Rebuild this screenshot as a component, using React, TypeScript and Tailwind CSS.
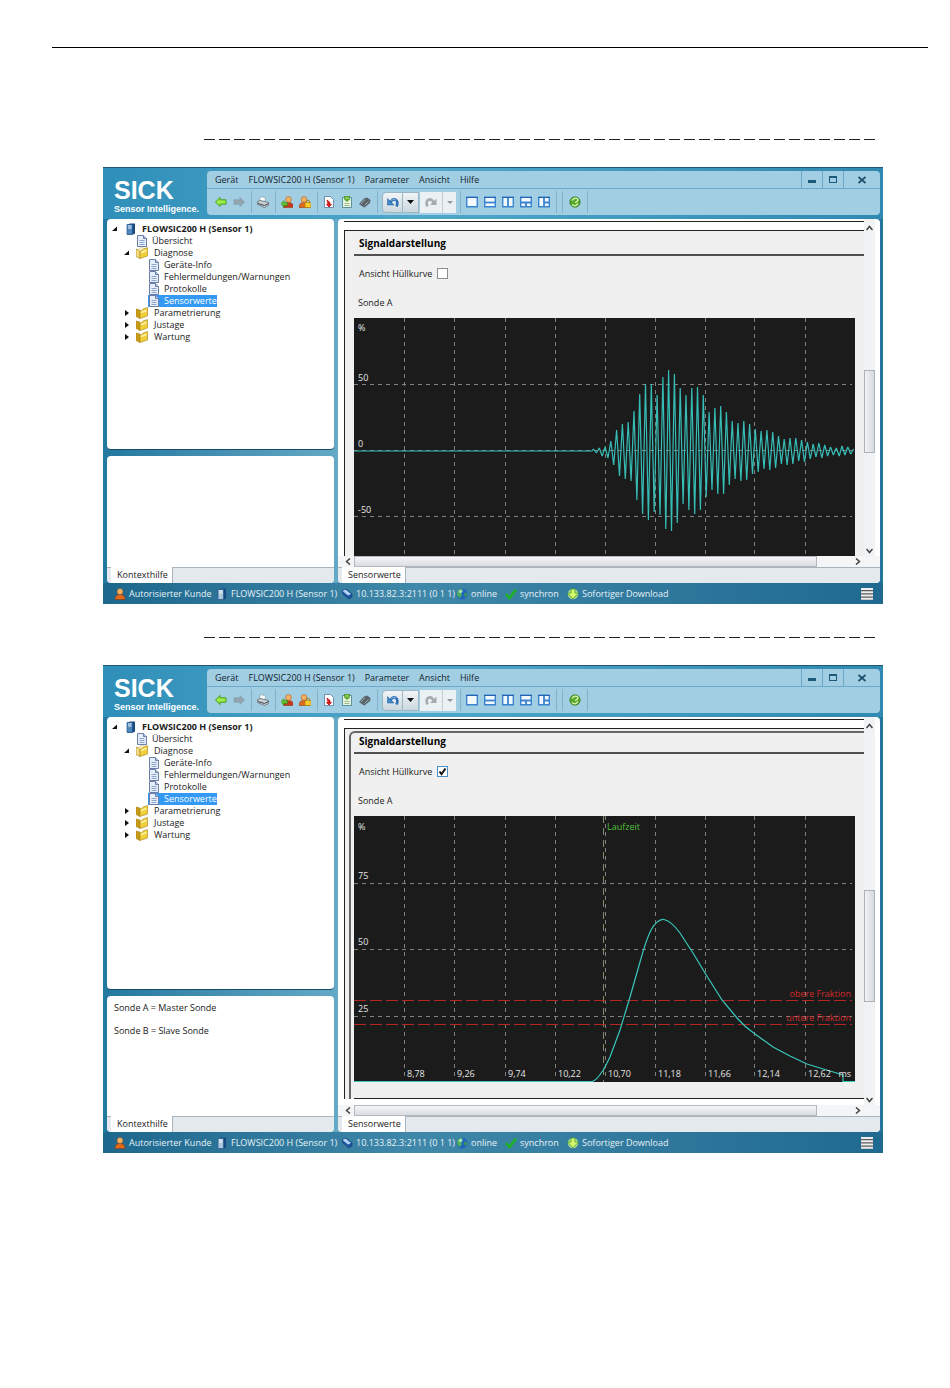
import { useState, type ReactNode } from "react";
import { clsx } from "clsx";

const MENU = ["Gerät", "FLOWSIC200 H (Sensor 1)", "Parameter", "Ansicht", "Hilfe"];

const GRID_X = [50, 100, 151, 201, 251, 301, 351, 400, 451];
const TIMES = ["8,78", "9,26", "9,74", "10,22", "10,70", "11,18", "11,66", "12,14", "12,62"];

// Burst amplitudes in chart pixels, one entry per oscillation.
const PEAKS = [
  2, 3, 4, 10, 21, 27, 29, 40, 57, 67, 67, 56, 74, 81, 77, 63, 56, 63, 64, 56, 39, 43, 45, 39, 30, 28, 30, 27,
  22, 20, 21, 19, 15, 12, 13, 13, 11, 9, 7, 8, 6, 4, 3, 5, 4, 2,
];
const TROUGHS = [
  2, 5, 7, 14, 25, 28, 30, 49, 63, 69, 61, 64, 78, 80, 72, 53, 59, 63, 59, 46, 39, 43, 43, 34, 28, 30, 29, 23,
  21, 18, 19, 17, 13, 14, 13, 10, 11, 8, 6, 7, 5, 4, 5, 4, 3, 1,
];

function burstPath(): string {
  const parts = ["M0 133H238"];
  PEAKS.forEach((peak, i) => {
    const x = 239.5 + i * 5.78;
    parts.push(`L${x.toFixed(1)} ${133 - peak}`);
    if (x + 2.9 < 501) parts.push(`L${(x + 2.9).toFixed(1)} ${133 + TROUGHS[i]}`);
  });
  return parts.join("");
}

function Icon({ children, size = 12 }: { children: ReactNode; size?: number }) {
  return (
    <svg width={size} height={size} viewBox="0 0 12 12" className="shrink-0" aria-hidden="true">
      {children}
    </svg>
  );
}

function PageIcon() {
  return (
    <Icon>
      <path d="M1.500.5h6l3 3v8h-9z" fill="#e6eefa" stroke="#6a7fa8" />
      <path d="M7.500.5v3h3" fill="#b7c8e4" stroke="#6a7fa8" />
      <path d="M3.500 5.500h5M3.500 7.500h5M3.500 9.500h5" stroke="#8fa5cc" />
    </Icon>
  );
}

function FolderIcon({ open }: { open?: boolean }) {
  return (
    <Icon>
      <path d="M0 2l4 1V11.500L0 9.500z" fill={open ? "#f3dc83" : "#c99c14"} stroke="#a8831c" strokeWidth=".6" />
      <path d="M4 4l2-.5L7 2l4.500-1.500V9L4 11.500z" fill="#f0cf3a" stroke="#a8831c" strokeWidth=".6" />
      <path d="M5 5.500l5.500-2" stroke="#fdf2a8" strokeWidth="1.500" />
      {open && <path d="M1.500 3l4-2.500 3 1-4.500 2.500z" fill="#fff6cf" stroke="#c9a63c" strokeWidth=".5" />}
    </Icon>
  );
}

function DeviceIcon({ light }: { light?: boolean }) {
  return (
    <Icon>
      <path d="M3 1.500L5 .5h5v10l-2 1H3z" fill="#174a80" />
      <path d="M2 1.500h5.500v10H2z" fill={light ? "#a9c6da" : "#4f87bd"} stroke="#24568b" strokeWidth=".7" />
      <path d="M3 3h3.500M3 5h3.500" stroke="#f2f8fc" />
    </Icon>
  );
}

function Twisty({ open }: { open?: boolean }) {
  return (
    <svg width="6" height="6" viewBox="0 0 6 6" aria-hidden="true">
      <path d={open ? "M5 .5V5H0z" : "M1 0l4 3-4 3z"} fill="#111" />
    </svg>
  );
}

const ARROW = "M.5 6L5 1.500v2.300h6v4.400H5v2.300z";

function PersonIcon({ color = "#e06a1c" }: { color?: string }) {
  return (
    <>
      <path d="M1 11.500c0-3.500 2-5 5-5s5 1.500 5 5z" fill={color} stroke="#8d2e08" strokeWidth=".5" />
      <circle cx="6" cy="3.500" r="2.900" fill="#f4b264" stroke="#a04a12" strokeWidth=".5" />
    </>
  );
}

const TOOLS: { label: string; icon: ReactNode; sep?: boolean }[] = [
  { label: "Zurück", icon: <path d={ARROW} fill="#9bea45" stroke="#3fa01c" strokeWidth="1" /> },
  {
    label: "Vor",
    icon: <path d={ARROW} transform="matrix(-1 0 0 1 12 0)" fill="#93a5ae" stroke="#7d98a4" strokeWidth=".6" />,
    sep: true,
  },
  {
    label: "Drucken",
    icon: (
      <>
        <path d="M2.500 5l1-4.500 5 1.500-.5 3.500z" fill="#fff" stroke="#8a979f" strokeWidth=".6" />
        <path d="M.5 5.500l3-1 8 2v3l-4 2-7-3z" fill="#c6ccd0" stroke="#5c666e" strokeWidth=".7" />
        <path d="M1 7.500l6.500 2 4-2" fill="none" stroke="#3f474d" />
      </>
    ),
    sep: true,
  },
  {
    label: "Anmelden",
    icon: (
      <>
        <g transform="translate(1.500 0)"><PersonIcon color="#c8381c" /></g>
        <path d="M0 7.500l3-3v2h3.500v3H3v2z" fill="#5fc02c" stroke="#2c7a14" strokeWidth=".5" />
      </>
    ),
  },
  {
    label: "Benutzer sperren",
    icon: (
      <>
        <g transform="translate(-1 0)"><PersonIcon /></g>
        <path d="M6 6.500h6v5H6z" fill="#f6cb2d" stroke="#a47708" strokeWidth=".6" />
        <path d="M7.500 6V5q1.500-2 3 0v1" fill="none" stroke="#a47708" />
      </>
    ),
    sep: true,
  },
  {
    label: "PDF",
    icon: (
      <>
        <path d="M1.500.5h6l3 3v8h-9z" fill="#fff" stroke="#55779c" strokeWidth=".8" />
        <path d="M4 4l3 2.500v2h1.500L6 11 3.500 8.500H5z" fill="#d8201c" stroke="#c01414" strokeWidth=".8" />
      </>
    ),
  },
  {
    label: "Bericht",
    icon: (
      <>
        <path d="M1.500 1.500h9v10h-9z" fill="#e9f4dc" stroke="#3f7c8c" strokeWidth=".8" />
        <path d="M3.500 0h5v3.500L6 5.500l-2.500-2z" fill="#62b32c" stroke="#2f7718" strokeWidth=".5" />
        <path d="M5 1v2M7 1v2" stroke="#d9f2bc" strokeWidth=".7" />
        <path d="M3.500 7.500h5M3.500 9.500h5" stroke="#9dbb87" />
      </>
    ),
  },
  {
    label: "Suchen",
    icon: (
      <>
        <path d="M0 8l5-5.500 3-1L11.500 4 11 7l-5.500 4.500-2-1z" fill="#59636a" />
        <path d="M2 8l4-4.500M5.500 9.500l4-4" stroke="#a0abb2" />
      </>
    ),
    sep: true,
  },
];

const LAYOUTS = [
  { label: "Ein Fenster", split: "" },
  { label: "Waagerecht teilen", split: "M1 6.500h10" },
  { label: "Senkrecht teilen", split: "M6 2v9" },
  { label: "Unten teilen", split: "M1 6.500h10M6 6v5" },
  { label: "Rechts teilen", split: "M6 2v9M6 6.500h5" },
];

function ToolButton({ label, children }: { label: string; children: ReactNode }) {
  return (
    <button type="button" aria-label={label} className="flex h-5 w-[18px] items-center justify-center">
      <Icon>{children}</Icon>
    </button>
  );
}

function Separator() {
  return <span className="mr-[2px] ml-[3px] h-[22px] w-px bg-[#7fb4cf]" />;
}

function Toolbar() {
  return (
    <div className="flex h-[26px] items-center pl-[5px]">
      {TOOLS.map((t) => (
        <span key={t.label} className="flex items-center">
          <ToolButton label={t.label}>{t.icon}</ToolButton>
          {t.sep && <Separator />}
        </span>
      ))}
      <div className="mr-1 ml-[2px] flex h-[21px]">
        <button
          type="button"
          aria-label="Rückgängig"
          className="flex w-[21px] items-center justify-center rounded-l-sm border border-[#9db6c3] bg-linear-to-b from-[#f1f4f6] to-[#cbd8df]"
        >
          <Icon>
            <path d="M3.500 7q1.500-5 5.500-3 2.500 2 .5 6.500" fill="none" stroke="#2f6fb4" strokeWidth="2.600" />
            <path d="M.5 2.500v6.500H7z" fill="#3f86cc" stroke="#235b98" strokeWidth=".5" />
            <path d="M4 4.500q2-2 5-.5" fill="none" stroke="#9cc8ee" strokeWidth=".8" />
          </Icon>
        </button>
        <button
          type="button"
          aria-label="Rückgängig-Liste"
          className="flex w-4 items-center justify-center border border-l-0 border-[#9db6c3] bg-linear-to-b from-[#f1f4f6] to-[#cbd8df]"
        >
          <svg width="7" height="4" viewBox="0 0 7 4" aria-hidden="true"><path d="M0 0h7L3.500 4z" fill="#111" /></svg>
        </button>
        <button type="button" aria-label="Wiederholen" className="ml-px flex w-[22px] items-center justify-center bg-[#ebf0f3]">
          <Icon>
            <path d="M8.500 7Q7 2 3 4q-2.500 2-.5 6.500" fill="none" stroke="#a3abb0" strokeWidth="2.600" />
            <path d="M11.500 2.500v6.500H5z" fill="#a3abb0" />
          </Icon>
        </button>
        <button
          type="button"
          aria-label="Wiederholen-Liste"
          className="flex w-[14px] items-center justify-center border-l border-[#c3ced4] bg-[#ebf0f3]"
        >
          <svg width="6" height="3" viewBox="0 0 6 3" aria-hidden="true"><path d="M0 0h6L3 3z" fill="#8c979d" /></svg>
        </button>
      </div>
      <span className="mr-[2px] h-[22px] w-px bg-[#7fb4cf]" />
      {LAYOUTS.map((l) => (
        <ToolButton key={l.label} label={l.label}>
          <path d="M.7 1.200h10.600v9.600H.7z" fill="#f2f9fe" stroke="#3a83cf" strokeWidth="1.400" />
          <path d="M0 1.500h12" stroke="#2262ae" />
          <path d={l.split} fill="none" stroke="#3a83cf" strokeWidth="1.800" />
        </ToolButton>
      ))}
      <Separator />
      <Separator />
      <span className="w-px" />
      <ToolButton label="Hilfe">
        <circle cx="6" cy="6" r="5.200" fill="#55a82c" stroke="#2f7420" strokeWidth=".7" />
        <path d="M3 4.500q3-4 6-1 0 2-3 3M3 8.500q3 3 6-1" fill="none" stroke="#d6f3a8" strokeWidth="1.300" />
      </ToolButton>
      <Separator />
    </div>
  );
}

function WindowHeader() {
  return (
    <header className="flex h-[51px] bg-linear-to-r from-[#2f8fb9] via-[#4fa8ca] via-40% to-[#3089b1] pr-[3px]">
      <div className="w-[104px] shrink-0 pt-2 pl-[11px] font-['Liberation_Sans',sans-serif] font-bold text-white">
        <p className="text-[25px] leading-[28px]">SICK</p>
        <p className="text-[9px] leading-[10px] whitespace-nowrap">Sensor Intelligence.</p>
      </div>
      <div className="mt-[3px] mb-1 min-w-0 flex-1 rounded bg-[#a2cee3]">
        <div className="flex h-[18px] border-b border-[#6aa9c8]">
          <nav className="flex flex-1 items-center gap-[10px] pt-px pl-2 text-[#12242e]">
            {MENU.map((m) => (
              <button key={m} type="button" className="whitespace-nowrap">{m}</button>
            ))}
          </nav>
          <button type="button" aria-label="Minimieren" className="flex w-[21px] items-center justify-center border-l border-[#6aa9c8]">
            <span className="mt-1 h-[3px] w-2 bg-[#1c5a7a]" />
          </button>
          <button type="button" aria-label="Maximieren" className="flex w-[21px] items-center justify-center border-l border-[#6aa9c8]">
            <span className="h-[7px] w-2 border border-t-2 border-[#1c5a7a]" />
          </button>
          <button type="button" aria-label="Schließen" className="flex w-[37px] items-center justify-center border-l border-[#6aa9c8]">
            <svg width="8" height="8" viewBox="0 0 8 8" aria-hidden="true">
              <path d="M.5 1l7 6M7.500 1l-7 6" stroke="#1c4f6c" strokeWidth="1.700" />
            </svg>
          </button>
        </div>
        <Toolbar />
      </div>
    </header>
  );
}

function TreeRow({
  label,
  level,
  kind,
  open,
  selected,
}: {
  label: string;
  level: 1 | 2;
  kind: "page" | "folder";
  open?: boolean;
  selected?: boolean;
}) {
  return (
    <li className={clsx("flex h-3 items-center", level === 1 ? "pl-3" : "pl-6")}>
      <span className="flex w-3 shrink-0">{kind === "folder" && <Twisty open={open} />}</span>
      <button
        type="button"
        className={clsx(
          "flex h-3 items-center whitespace-nowrap",
          kind === "page" ? "gap-1" : "gap-[6px]",
          selected && "bg-[#3399f3] text-white",
        )}
      >
        {kind === "page" ? <PageIcon /> : <FolderIcon open={open} />}
        {label}
      </button>
    </li>
  );
}

function DeviceTree() {
  return (
    <ul className="pt-[3px] pl-[5px]">
      <li className="flex h-[13px] items-center">
        <span className="w-[13px]"><Twisty open /></span>
        <button type="button" className="flex items-center gap-[5px] font-bold whitespace-nowrap">
          <DeviceIcon />
          FLOWSIC200 H (Sensor 1)
        </button>
      </li>
      <TreeRow level={1} kind="page" label="Übersicht" />
      <TreeRow level={1} kind="folder" open label="Diagnose" />
      <TreeRow level={2} kind="page" label="Geräte-Info" />
      <TreeRow level={2} kind="page" label="Fehlermeldungen/Warnungen" />
      <TreeRow level={2} kind="page" label="Protokolle" />
      <TreeRow level={2} kind="page" selected label="Sensorwerte" />
      <TreeRow level={1} kind="folder" label="Parametrierung" />
      <TreeRow level={1} kind="folder" label="Justage" />
      <TreeRow level={1} kind="folder" label="Wartung" />
    </ul>
  );
}

function TabStrip({ label }: { label: string }) {
  return (
    <div className="flex h-4 rounded-b-sm border-t border-[#a9b4bc] bg-[#e4e9ed] pl-1">
      <button type="button" className="-mt-px border-r border-[#a9b4bc] bg-white pr-1 pl-[6px]">{label}</button>
    </div>
  );
}

function Chevron({ d, label }: { d: string; label: string }) {
  return (
    <button type="button" aria-label={label} className="flex h-[11px] w-[11px] shrink-0 items-center justify-center">
      <svg width="7" height="7" viewBox="0 0 7 7" aria-hidden="true">
        <path d={d} fill="none" stroke="#444" strokeWidth="1.500" />
      </svg>
    </button>
  );
}

function Gridlines({ rows, bottom }: { rows: number[]; bottom: number }) {
  return (
    <g stroke="#808080" strokeDasharray="4 4">
      {GRID_X.map((x) => (
        <path key={x} d={`M${x}.5 0V${bottom}`} />
      ))}
      {rows.map((y) => (
        <path key={y} d={`M0 ${y}.5H498`} />
      ))}
    </g>
  );
}

function BurstChart() {
  return (
    <svg viewBox="0 0 501 238" className="block w-full bg-[#1b1b1b] text-[9px]" role="img" aria-label="Signal Sonde A">
      <Gridlines rows={[66, 132, 198]} bottom={238} />
      <path d={burstPath()} fill="none" stroke="#36bdb6" strokeWidth="1.200" strokeLinejoin="bevel" />
      <g fill="#e6e6e6">
        <text x="4" y="13">%</text>
        <text x="4" y="63">50</text>
        <text x="4" y="129">0</text>
        <text x="4" y="195">-50</text>
      </g>
    </svg>
  );
}

function EnvelopeChart() {
  return (
    <svg viewBox="0 0 501 266" className="block w-full bg-[#1b1b1b] text-[9px]" role="img" aria-label="Hüllkurve Sonde A">
      <Gridlines rows={[67, 133, 200]} bottom={262} />
      <path d="M249.500 0V266" stroke="#7d8f6a" strokeDasharray="7 5" />
      <g stroke="#b32626" strokeDasharray="12 4">
        <path d="M0 184.500H498" />
        <path d="M0 208.500H498" />
      </g>
      <path
        d="M0 265.500H238C243 265 247 257 250 253L256 241 266 214 276 181 286 146C291 128 295 118 297 114C301 107 305 103 310 103.500C316 105 321 110 326 117L339 137 351 157 368 184 383 202C389 209 395 214 401 218L419 231 436 240 453 248 466 252 486 258 489 259V265.500H501"
        fill="none"
        stroke="#38c8bc"
        strokeWidth="1.200"
      />
      <g fill="#e6e6e6">
        <text x="4" y="14">%</text>
        <text x="4" y="63">75</text>
        <text x="4" y="129">50</text>
        <text x="4" y="196">25</text>
        {TIMES.map((t, i) => (
          <text key={t} x={GRID_X[i] + 3} y="261">{t}</text>
        ))}
        <text x="497" y="261" textAnchor="end">ms</text>
      </g>
      <text x="253" y="14" fill="#4fc03a">Laufzeit</text>
      <g fill="#d42a2a" textAnchor="end">
        <text x="497" y="181">obere Fraktion</text>
        <text x="497" y="205">untere Fraktion</text>
      </g>
    </svg>
  );
}

function SensorView({ id, envelope }: { id: string; envelope: boolean }) {
  const [checked, setChecked] = useState(envelope);

  const content = (
    <>
      <h2
        className={clsx(
          "flex items-center border-b-2 border-[#505050] pl-[5px] text-[10px] font-bold text-black",
          envelope ? "h-[21px] pb-[3px]" : "h-[25px]",
        )}
      >
        Signaldarstellung
      </h2>
      <div className="flex h-[35px] items-center gap-[5px] pl-[5px]">
        <label htmlFor={id}>Ansicht Hüllkurve</label>
        <input
          id={id}
          type="checkbox"
          checked={checked}
          onChange={(e) => setChecked(e.target.checked)}
          className="peer h-[11px] w-[11px] appearance-none border border-[#8a8f94] bg-white checked:border-[#4a90c8]"
        />
        <svg width="9" height="9" viewBox="0 0 9 9" className="pointer-events-none invisible -ml-[15px] peer-checked:visible" aria-hidden="true">
          <path d="M1.500 4.500l2 2.500L7.500 1.500" fill="none" stroke="#111" strokeWidth="2" />
        </svg>
      </div>
      <p className="mb-1 flex h-[23px] items-center pl-1">Sonde A</p>
      <div className="pr-[9px]">{envelope ? <EnvelopeChart /> : <BurstChart />}</div>
      {envelope && <div className="mt-4 mb-[6px] border-t border-[#222]" />}
    </>
  );

  return (
    <section className="flex min-w-0 flex-1 flex-col overflow-hidden rounded bg-white">
      <div className="flex">
        <div className="min-w-0 flex-1 pt-[2px] pl-[6px]">
          <div className="h-[9px] border-t border-[#222]" />
          <div className={clsx("border-t border-l border-[#222] bg-[#f0f0f0]", envelope ? "pt-[2px] pl-1" : "pl-[9px]")}>
            {envelope ? (
              <div className="rounded-tl-md border-t-2 border-l-2 border-[#666] pl-[3px]">{content}</div>
            ) : (
              content
            )}
          </div>
        </div>
        <div className="mr-[5px] flex w-[11px] flex-col bg-[#f1f2f3] pt-1">
          <Chevron label="Nach oben" d="M.5 5l3-3.500 3 3.500" />
          <div className={clsx(envelope ? "grow-[12]" : "grow-[28]")} />
          <div
            className={clsx(
              "border border-[#adb2b8] bg-linear-to-r from-[#f1f2f5] to-[#d5d9e0]",
              envelope ? "h-28" : "h-[83px]",
            )}
          />
          <div className={clsx(envelope ? "grow-[7]" : "grow-[19]")} />
          <Chevron label="Nach unten" d="M.5 2l3 3.500 3-3.500" />
        </div>
      </div>
      <div className="flex h-[11px] bg-[#f4f5f6] pr-[17px] pl-[5px]">
        <Chevron label="Nach links" d="M5 .5L1.500 3.500l3.500 3" />
        <div className="flex-1">
          <div className="h-[11px] w-[93%] border border-[#b5b9bf] bg-linear-to-b from-[#f4f5f7] to-[#d9dce2]" />
        </div>
        <Chevron label="Nach rechts" d="M2 .5l3.500 3L2 6.500" />
      </div>
      <TabStrip label="Sensorwerte" />
    </section>
  );
}

function StatusBar() {
  return (
    <footer className="flex h-[21px] items-center bg-linear-to-r from-[#1d678d] via-[#4088a9] via-40% to-[#1f6990] pt-px pr-[10px] pl-[11px] whitespace-nowrap text-[#e6f2f8]">
      <span className="flex w-[102px] items-center gap-[3px]"><Icon><PersonIcon /></Icon>Autorisierter Kunde</span>
      <span className="flex w-[125px] items-center gap-[3px]"><DeviceIcon light />FLOWSIC200 H (Sensor 1)</span>
      <span className="flex w-[115px] items-center gap-[3px]">
        <Icon>
          <path d="M1 3l4-2 6 5v3l-3 2-6-5z" fill="#1d55a0" stroke="#123a70" strokeWidth=".6" />
          <path d="M1.500 3l3-1.500 5.500 4.500-3 1.500z" fill="#b4d5f4" />
        </Icon>
        10.133.82.3:2111 (0 1 1)
      </span>
      <span className="flex w-[49px] items-center gap-[3px]">
        <Icon>
          <circle cx="6" cy="6" r="5.600" fill="#1f66bd" />
          <path d="M1 4Q2 1 6 .8L7 3 5 5l1 2-2 3Q0 8 1 4z" fill="#4fae5c" />
          <circle cx="4.500" cy="3.500" r="1.800" fill="#c9f0e4" opacity=".7" />
          <path d="M8 5.500l3-1q.5 3-2 5z" fill="#3f9c4a" />
        </Icon>
        online
      </span>
      <span className="flex w-[62px] items-center gap-[3px]">
        <Icon><path d="M1 6l3.500 4L11 1.500" fill="none" stroke="#1fb02a" strokeWidth="2.800" /></Icon>
        synchron
      </span>
      <span className="flex flex-1 items-center gap-[3px]">
        <Icon>
          <circle cx="6" cy="6" r="5.200" fill="#a9dd95" />
          <path d="M4 1h4v4h3.500L6 11 .5 5H4z" fill="#d5f56a" stroke="#3d9a25" strokeWidth=".7" />
        </Icon>
        Sofortiger Download
      </span>
      <Icon>
        <path d="M0 0h12v12H0z" fill="#5c5c5c" />
        <path d="M0 1h12M0 4.200h12M0 7.500h12M0 10.800h12" stroke="#ededed" strokeWidth="2" />
      </Icon>
    </footer>
  );
}

function AppWindow({ id, envelope = false, help = [] }: { id: string; envelope?: boolean; help?: string[] }) {
  return (
    <div className="border-t border-[#1f5876] text-[9px] leading-3 text-[#1a1a1a]">
      <WindowHeader />
      <div className="flex gap-1 bg-linear-to-r from-[#22789f] via-[#66abc8] via-31% to-[#24759c] pr-[3px] pl-1">
        <div className="flex w-[227px] shrink-0 flex-col gap-[6px]">
          <div className="flex-1 rounded border-b border-[#174c68] bg-white"><DeviceTree /></div>
          <div className={clsx("flex flex-col overflow-hidden rounded bg-white", envelope ? "h-[136px]" : "h-[127px]")}>
            <div className="flex flex-1 flex-col gap-[11px] px-[7px] pt-[6px]">
              {help.map((line) => (
                <p key={line}>{line}</p>
              ))}
            </div>
            <TabStrip label="Kontexthilfe" />
          </div>
        </div>
        <SensorView id={id} envelope={envelope} />
      </div>
      <StatusBar />
    </div>
  );
}

function DashedRule() {
  return (
    <div className="mr-[5px] ml-[101px] h-px bg-[repeating-linear-gradient(90deg,#222_0_11px,transparent_11px_15px)]" />
  );
}

export default function App() {
  return (
    <main className="min-h-screen bg-white pt-[47px] font-['Open_Sans','Noto_Sans',sans-serif]">
      <hr className="mr-[22px] ml-[52px] border-t border-black" />
      <div className="mt-[91px] mr-[67px] ml-[103px] flex flex-col">
        <DashedRule />
        <div className="mt-[27px] mb-[33px]">
          <AppWindow id="envelope-off" />
        </div>
        <DashedRule />
        <div className="mt-[27px]">
          <AppWindow id="envelope-on" envelope help={["Sonde A = Master Sonde", "Sonde B = Slave Sonde"]} />
        </div>
      </div>
    </main>
  );
}
